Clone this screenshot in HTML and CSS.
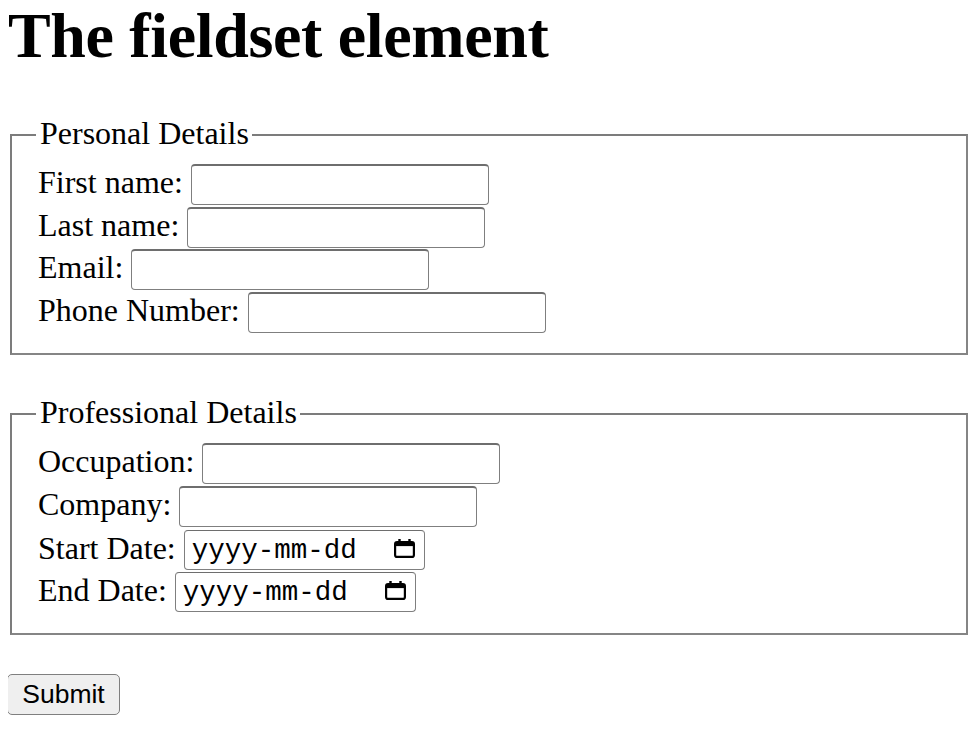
FILE: index.html
```html
<!DOCTYPE html>
<html lang="en">
<head>
<meta charset="utf-8">
<title>The fieldset element</title>
<link rel="stylesheet" href="styles.css">
</head>
<body>
<h1 class="title">The fieldset element</h1>
<form class="form">
  <fieldset class="group group-personal">
    <legend class="group-legend">Personal Details</legend>
    <div class="rows">
      <div class="row"><label class="row-label" for="fname">First name:</label><input class="field" id="fname" type="text"></div>
      <div class="row"><label class="row-label" for="lname">Last name:</label><input class="field" id="lname" type="text"></div>
      <div class="row"><label class="row-label" for="email">Email:</label><input class="field" id="email" type="text"></div>
      <div class="row"><label class="row-label" for="phone">Phone Number:</label><input class="field" id="phone" type="text"></div>
    </div>
  </fieldset>
  <fieldset class="group group-pro">
    <legend class="group-legend">Professional Details</legend>
    <div class="rows">
      <div class="row"><label class="row-label" for="occ">Occupation:</label><input class="field" id="occ" type="text"></div>
      <div class="row"><label class="row-label" for="comp">Company:</label><input class="field" id="comp" type="text"></div>
      <div class="row"><span class="row-label">Start Date:</span><span class="field date"><span class="date-text">yyyy-mm-dd</span><svg class="cal" width="21" height="19" viewBox="0 0 21 19"><rect x="4.3" y="0" width="2.4" height="4" fill="#000"/><rect x="14.3" y="0" width="2.4" height="4" fill="#000"/><rect x="1.1" y="3.1" width="18.8" height="14.8" rx="2" fill="none" stroke="#000" stroke-width="2.2"/><rect x="1.1" y="3.1" width="18.8" height="4" fill="#000"/></svg></span></div>
      <div class="row"><span class="row-label">End Date:</span><span class="field date"><span class="date-text">yyyy-mm-dd</span><svg class="cal" width="21" height="19" viewBox="0 0 21 19"><rect x="4.3" y="0" width="2.4" height="4" fill="#000"/><rect x="14.3" y="0" width="2.4" height="4" fill="#000"/><rect x="1.1" y="3.1" width="18.8" height="14.8" rx="2" fill="none" stroke="#000" stroke-width="2.2"/><rect x="1.1" y="3.1" width="18.8" height="4" fill="#000"/></svg></span></div>
    </div>
  </fieldset>
  <button class="submit" type="button">Submit</button>
</form>
</body>
</html>
```

FILE: styles.css
```css
html, body {
  background: #fff;
}

body {
  margin: 0 8px 8px;
  font-family: "Liberation Serif", "Times New Roman", serif;
  font-size: 32px;
  color: #000;
}

.title {
  margin: 3.5px 0 0;
  font-size: 64px;
  line-height: 64px;
  font-weight: bold;
  letter-spacing: -0.35px;
}

.form {
  margin: 0;
}

.group {
  margin: 0 2px;
  border: 2px solid #7c7c7c;
  border-right-color: #858585;
  border-bottom-color: #858585;
  padding: 11px 24px 20.5px 26px;
  min-width: 0;
}

.group-personal {
  margin-top: 49.5px;
}

.group-pro {
  margin-top: 40.5px;
}

.group-legend {
  margin-left: -2px;
  padding: 0 3px 4px 4px;
  line-height: 32px;
}

.rows {
  display: flex;
  flex-direction: column;
}

.group-personal .rows {
  gap: 1.6px;
}

.group-pro .rows {
  gap: 2.5px;
}

.row {
  display: flex;
  align-items: flex-start;
  gap: 8px;
}

.row-label {
  line-height: normal;
  white-space: nowrap;
}

.field {
  box-sizing: border-box;
  width: 298px;
  height: 41px;
  margin: 0;
  padding: 0 6px;
  border: 1px solid #7f7f7f;
  border-top: 2px solid #6e6e6e;
  border-radius: 4px;
  background: #fff;
  font-family: "Liberation Sans", Arial, sans-serif;
  font-size: 26px;
}

.date {
  display: flex;
  align-items: center;
  width: 241px;
  height: 40px;
  padding: 1px 9px 0 7px;
  border-top-width: 1px;
}

.date-text {
  font-family: "Liberation Mono", "Courier New", monospace;
  font-size: 27.5px;
  line-height: normal;
  color: #000;
}

.cal {
  display: block;
  margin-left: auto;
  margin-bottom: 4px;
}

.submit {
  display: block;
  box-sizing: border-box;
  margin: 39px 0 0 -1px;
  width: 113px;
  height: 41.5px;
  padding: 0;
  border: 1px solid #7f7f7f;
  border-radius: 5px;
  background: #efefef;
  font-family: "Liberation Sans", Arial, sans-serif;
  font-size: 26.5px;
  color: #000;
}
```
